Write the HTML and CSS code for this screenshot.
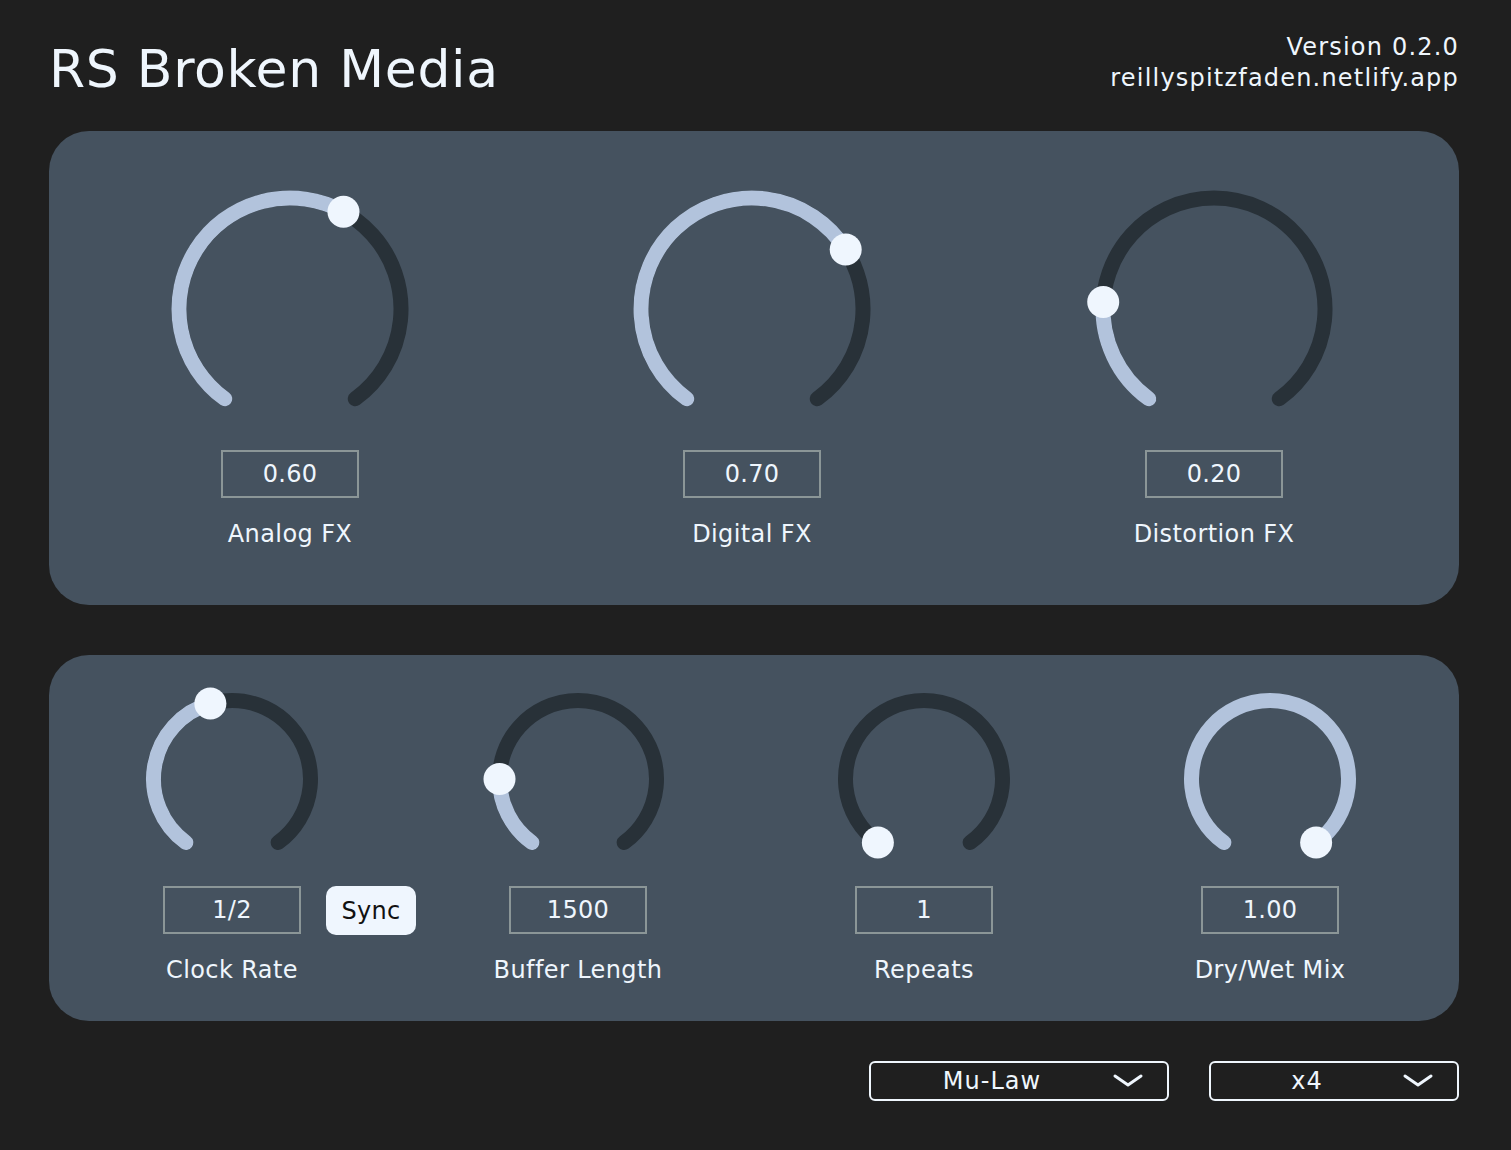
FILE: index.html
```html
<!DOCTYPE html>
<html lang="en">
<head>
<meta charset="utf-8">
<title>RS Broken Media</title>
<link rel="stylesheet" href="styles.css">
</head>
<body>
<div class="app">
  <header class="header">
    <h1 class="title">RS Broken Media</h1>
    <div class="meta">
      <div>Version 0.2.0</div>
      <div>reillyspitzfaden.netlify.app</div>
    </div>
  </header>

  <section class="panel panel-top">
    <div class="knob">
      <svg class="dial-lg" width="260" height="260" viewBox="0 0 260 260">
        <path class="track" d="M 64.75 219.8 A 111 111 0 1 1 195.25 219.8"/>
        <path class="fill" d="M 64.75 219.8 A 111 111 0 0 1 183.48 32.73"/>
        <circle class="thumb" cx="183.48" cy="32.73" r="16"/>
      </svg>
      <div class="value">0.60</div>
      <div class="label">Analog FX</div>
    </div>
    <div class="knob">
      <svg class="dial-lg" width="260" height="260" viewBox="0 0 260 260">
        <path class="track" d="M 64.75 219.8 A 111 111 0 1 1 195.25 219.8"/>
        <path class="fill" d="M 64.75 219.8 A 111 111 0 1 1 223.72 70.52"/>
        <circle class="thumb" cx="223.72" cy="70.52" r="16"/>
      </svg>
      <div class="value">0.70</div>
      <div class="label">Digital FX</div>
    </div>
    <div class="knob">
      <svg class="dial-lg" width="260" height="260" viewBox="0 0 260 260">
        <path class="track" d="M 64.75 219.8 A 111 111 0 1 1 195.25 219.8"/>
        <path class="fill" d="M 64.75 219.8 A 111 111 0 0 1 19.22 123.03"/>
        <circle class="thumb" cx="19.22" cy="123.03" r="16"/>
      </svg>
      <div class="value">0.20</div>
      <div class="label">Distortion FX</div>
    </div>
  </section>

  <section class="panel panel-bottom">
    <div class="knob">
      <svg class="dial-sm" width="200" height="200" viewBox="0 0 200 200">
        <path class="track" d="M 53.86 163.51 A 78.5 78.5 0 1 1 146.14 163.51"/>
        <path class="fill" d="M 53.86 163.51 A 78.5 78.5 0 0 1 78.36 24.54"/>
        <circle class="thumb" cx="78.36" cy="24.54" r="16"/>
      </svg>
      <div class="value-wrap">
        <div class="value">1/2</div>
        <button class="sync">Sync</button>
      </div>
      <div class="label">Clock Rate</div>
    </div>
    <div class="knob">
      <svg class="dial-sm" width="200" height="200" viewBox="0 0 200 200">
        <path class="track" d="M 53.86 163.51 A 78.5 78.5 0 1 1 146.14 163.51"/>
        <path class="fill" d="M 53.86 163.51 A 78.5 78.5 0 0 1 21.5 100"/>
        <circle class="thumb" cx="21.5" cy="100" r="16"/>
      </svg>
      <div class="value">1500</div>
      <div class="label">Buffer Length</div>
    </div>
    <div class="knob">
      <svg class="dial-sm" width="200" height="200" viewBox="0 0 200 200">
        <path class="track" d="M 53.86 163.51 A 78.5 78.5 0 1 1 146.14 163.51"/>
        <circle class="thumb" cx="53.86" cy="163.51" r="16"/>
      </svg>
      <div class="value">1</div>
      <div class="label">Repeats</div>
    </div>
    <div class="knob">
      <svg class="dial-sm" width="200" height="200" viewBox="0 0 200 200">
        <path class="fill" d="M 53.86 163.51 A 78.5 78.5 0 1 1 146.14 163.51"/>
        <circle class="thumb" cx="146.14" cy="163.51" r="16"/>
      </svg>
      <div class="value">1.00</div>
      <div class="label">Dry/Wet Mix</div>
    </div>
  </section>

  <div class="selects">
    <div class="select select-mode">
      <span class="select-text">Mu-Law</span>
      <svg class="chevron" width="30" height="14" viewBox="0 0 30 14"><path d="M 2 2 L 15 11 L 28 2"/></svg>
    </div>
    <div class="select select-rate">
      <span class="select-text">x4</span>
      <svg class="chevron" width="30" height="14" viewBox="0 0 30 14"><path d="M 2 2 L 15 11 L 28 2"/></svg>
    </div>
  </div>
</div>
</body>
</html>
```

FILE: styles.css
```css
* { box-sizing: border-box; }

html, body {
  margin: 0;
  padding: 0;
  background: #1f1f1f;
}

body {
  font-family: "DejaVu Sans", Verdana, sans-serif;
  color: #eff6fd;
}

.app {
  width: 1511px;
  padding: 32px 52px 0 49px;
}

.header {
  display: flex;
  justify-content: space-between;
  align-items: flex-start;
}

.title {
  margin: 7px 0 0 0;
  font-size: 52px;
  font-weight: normal;
  line-height: 60px;
  letter-spacing: 0.7px;
}

.meta {
  text-align: right;
  font-size: 24px;
  line-height: 31px;
  letter-spacing: 1.2px;
}

.panel {
  background: #45525f;
  border-radius: 40px;
  display: grid;
}

.panel-top {
  margin-top: 32px;
  grid-template-columns: repeat(3, 462px);
  padding: 48px 0 56px 10px;
}

.panel-bottom {
  margin-top: 50px;
  grid-template-columns: repeat(4, 346px);
  padding: 24px 0 36px 10px;
}

.knob {
  display: flex;
  flex-direction: column;
  align-items: center;
}

.dial-lg { margin-bottom: 11px; display: block; }
.dial-sm { margin-bottom: 7px; display: block; }

.track, .fill {
  fill: none;
  stroke-width: 15;
  stroke-linecap: round;
}
.track { stroke: #283138; }
.fill { stroke: #b2c3dc; }
.thumb { fill: #eff6fe; }

.value {
  width: 138px;
  height: 48px;
  border: 2px solid #8b9697;
  display: flex;
  align-items: center;
  justify-content: center;
  font-size: 24px;
  letter-spacing: 0.3px;
}

.value-wrap {
  position: relative;
}

.sync {
  position: absolute;
  left: 163px;
  top: 0;
  width: 90px;
  height: 49px;
  border: none;
  border-radius: 10px;
  background: #eff6fe;
  color: #111;
  font-family: "DejaVu Sans", Verdana, sans-serif;
  font-size: 24px;
  letter-spacing: 0.3px;
  padding: 0;
}

.label {
  margin-top: 21px;
  font-size: 24px;
  line-height: 30px;
  letter-spacing: 0.4px;
}

.selects {
  margin-top: 40px;
  display: flex;
  justify-content: flex-end;
  gap: 40px;
}

.select {
  height: 40px;
  border: 2px solid #eff6fd;
  border-radius: 6px;
  display: flex;
  align-items: center;
  padding-right: 24px;
  font-size: 24px;
}

.select-mode { width: 300px; }
.select-rate { width: 250px; }

.select-text {
  flex: 1;
  text-align: center;
  letter-spacing: 1px;
}

.chevron { display: block; }
.chevron path {
  fill: none;
  stroke: #eff6fd;
  stroke-width: 3;
  stroke-linecap: round;
  stroke-linejoin: round;
}
```
